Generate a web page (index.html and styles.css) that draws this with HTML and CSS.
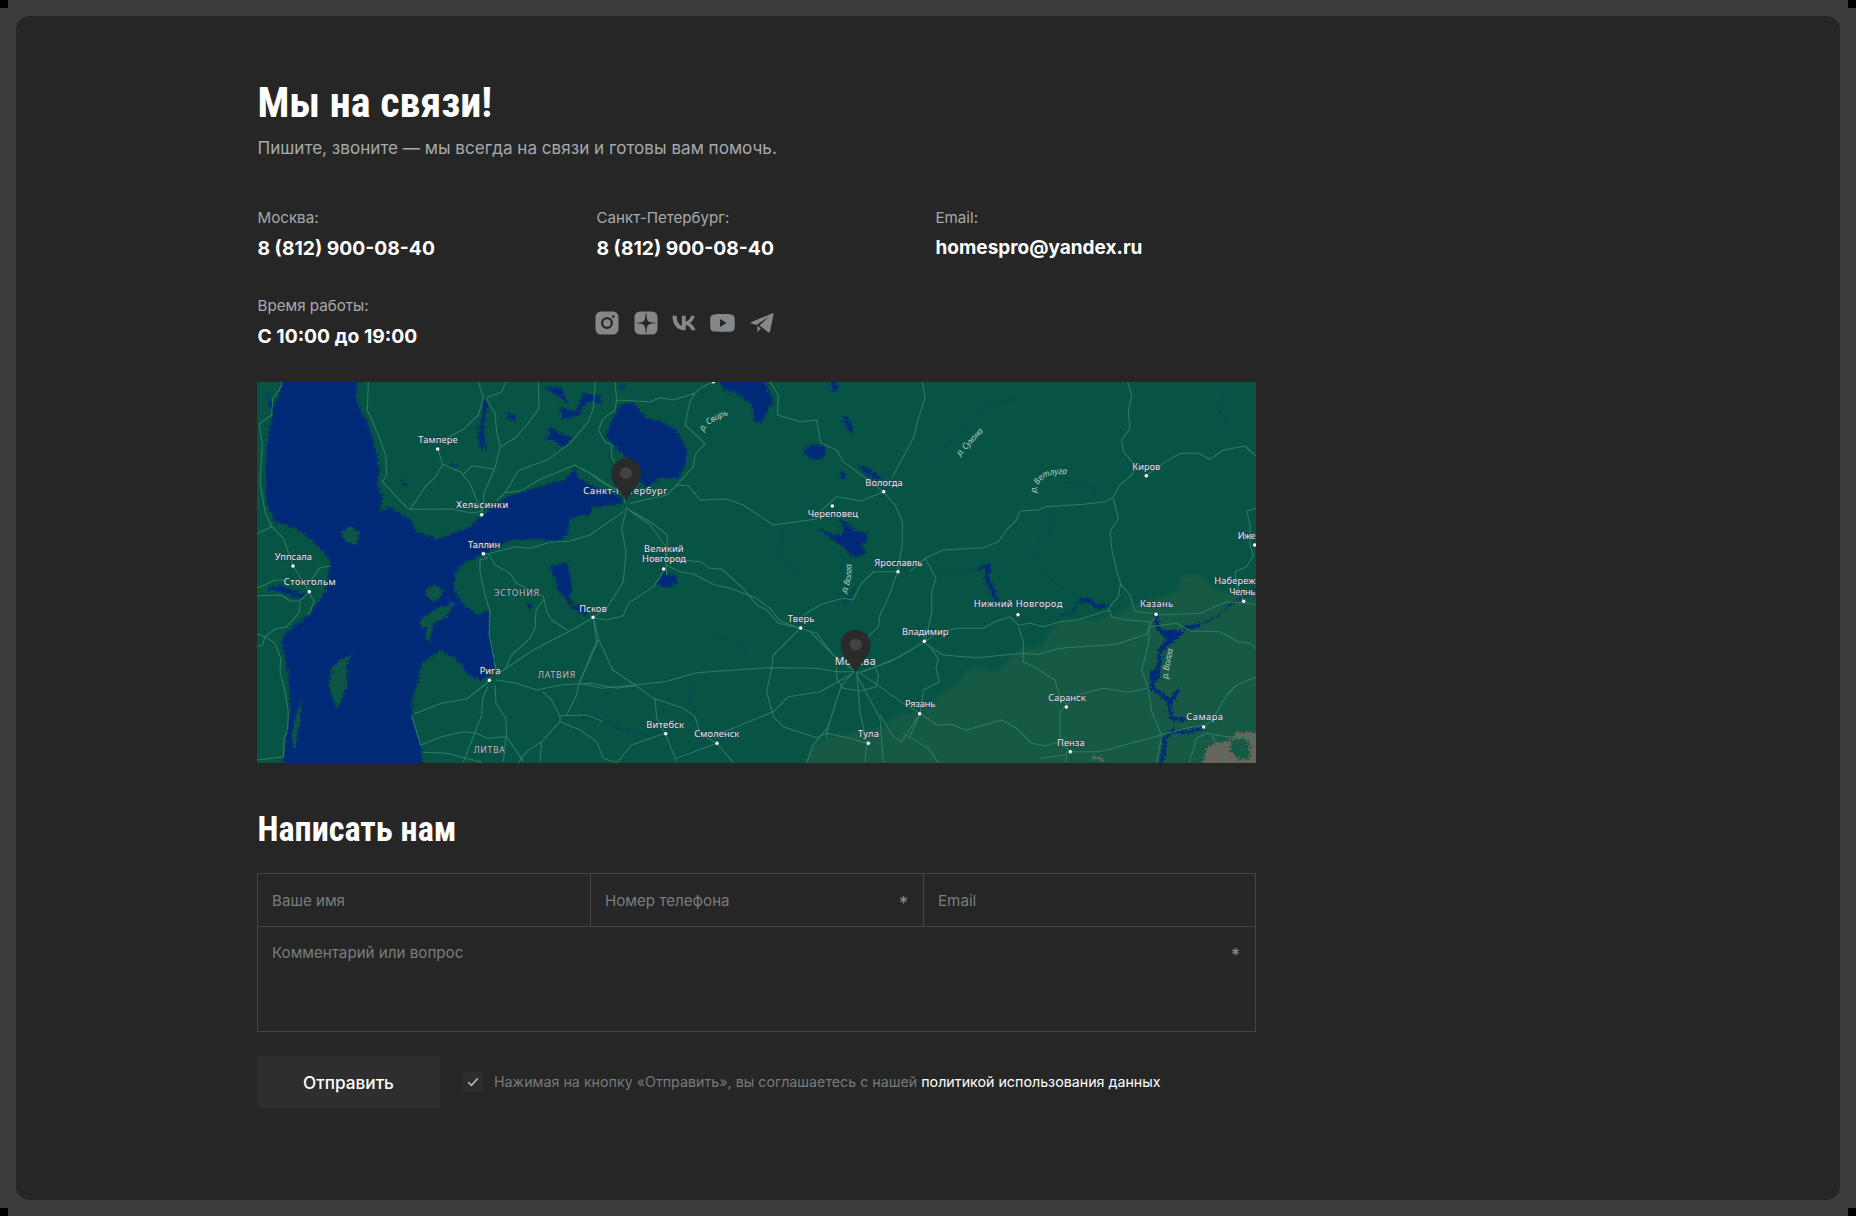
FILE: index.html
```
<!DOCTYPE html>
<html lang="ru">
<head>
<meta charset="utf-8">
<title>Мы на связи!</title>
<link rel="stylesheet" href="styles.css">
</head>
<body>
<i class="corner tl"></i><i class="corner tr"></i><i class="corner bl"></i><i class="corner br"></i>
<main class="panel">
  <section class="content">
    <h1>Мы на связи!</h1>
    <p class="lead">Пишите, звоните — мы всегда на связи и готовы вам помочь.</p>

    <div class="contacts">
      <div><div class="label">Москва:</div><div class="value">8 (812) 900-08-40</div></div>
      <div><div class="label">Санкт-Петербург:</div><div class="value">8 (812) 900-08-40</div></div>
      <div><div class="label">Email:</div><div class="value mail">homespro@yandex.ru</div></div>
      <div><div class="label">Время работы:</div><div class="value hours">С 10:00 до 19:00</div></div>
      <div class="social">
        <svg width="24" height="24" viewBox="0 0 24 24"><path fill-rule="evenodd" d="M6 .5h12A5.500 5.500 0 0 1 23.500 6v12a5.500 5.500 0 0 1-5.500 5.500H6A5.500 5.500 0 0 1 .5 18V6A5.500 5.500 0 0 1 6 .5zM12 6a6 6 0 1 0 0 12a6 6 0 0 0 0-12zm0 2.200a3.800 3.800 0 1 1 0 7.600a3.800 3.800 0 0 1 0-7.600zM18.300 4.200a1.400 1.400 0 1 0 0 2.800a1.400 1.400 0 0 0 0-2.800z"/></svg>
        <svg width="24" height="24" viewBox="0 0 24 24"><path fill-rule="evenodd" d="M6 .5h12A5.500 5.500 0 0 1 23.500 6v12a5.500 5.500 0 0 1-5.500 5.500H6A5.500 5.500 0 0 1 .5 18V6A5.500 5.500 0 0 1 6 .5zM11.600 2c-.2 5-.6 6.800-1.800 8-1.200 1.200-3 1.600-7.800 1.800v.4c4.800.2 6.600.6 7.800 1.800s1.600 3 1.800 8h.8c.2-5 .6-6.800 1.800-8s3-1.600 7.800-1.800v-.4c-4.800-.2-6.600-.6-7.800-1.800s-1.600-3-1.800-8z"/></svg>
        <svg width="24" height="24" viewBox="0 0 24 24"><path d="M13 19.300C5 19.300.7 13.900.5 4.700h4.100c.1 6.700 3.100 9.500 5.300 10.100V4.700h3.800v5.800c2.200-.2 4.600-2.900 5.400-5.800h3.700c-.6 3.500-3.200 6.200-5 7.200 1.800.9 4.700 3.100 5.800 7.400h-4.100c-.9-2.700-3-4.900-5.800-5.200v5.200z"/></svg>
        <svg width="25" height="24" viewBox="0 0 25 24"><path fill-rule="evenodd" d="M4 3.400c3-.5 14-.5 17 0 2.600.4 3.600 1.600 3.700 4.100.2 3 .2 6 0 9-.1 2.500-1.100 3.700-3.700 4.100-3 .4-14 .4-17 0-2.600-.4-3.600-1.600-3.700-4.100-.2-3-.2-6 0-9C.4 5 1.400 3.800 4 3.400zM10 8v8l6.600-4z"/></svg>
        <svg width="24" height="24" viewBox="0 0 24 24"><path d="M22.500 2.300 1 11.200c-.6.300-.5.900 0 1.100l5.300 1.700L19 5.600 9.500 14.500l9 7c.5.400 1.200.2 1.400-.5L23.600 3.200c.1-.7-.4-1.200-1.100-.9zM7.400 14.800v6.400l3.400-3.600z"/></svg>
      </div>
    </div>

    <svg class="map" viewBox="21 21 2997 1143" preserveAspectRatio="none">
      <defs>
        <filter id="coast" x="-5%" y="-5%" width="110%" height="110%"><feTurbulence type="fractalNoise" baseFrequency=".16" numOctaves="3" seed="4"/><feDisplacementMap in="SourceGraphic" scale="26" xChannelSelector="R" yChannelSelector="G"/></filter>
        <filter id="soft"><feGaussianBlur stdDeviation="8"/></filter>
        <g id="pin"><path d="M0 86C-4 62-45 40-45 0a45 45 0 0 1 90 0C45 40 4 62 0 86z" fill="#2a2a2a"/><circle r="18" fill="#434343"/></g>
      </defs>
      <rect x="0" y="0" width="3040" height="1180" fill="#075444"/>
      <path class="steppe" filter="url(#soft)" d="M3040 670 2940 655 2890 640 2850 600 2800 600 2780 650 2680 680 2590 720 2540 735 2440 735 2400 770 2380 810 2300 830 2240 890 2160 875 2120 930 2080 950 2020 1010 1940 1020 1890 1060 1760 1080 1690 1110 1650 1190 3040 1190z"/>
      <g filter="url(#coast)">
        <path class="water" d="M103 0H322L318 70 335 110 352 140 365 185 380 230 388 280 382 330 398 370 390 405 430 400 450 425 480 430 500 470 530 480 560 492 610 475 660 455 700 420 740 385 775 365 850 340 900 325 945 315 975 275 985 310 1020 330 1075 350 1115 365 1115 388 1030 395 1015 422 985 420 958 435 955 475 930 498 860 492 780 495 745 515 700 540 650 560 615 590 612 640 640 690 685 722 715 703 718 780 735 860 730 890 700 915 675 912 655 895 620 855 575 825 515 865 500 935 485 975 490 1040 510 1100 522 1185H95L105 1120 118 1010 120 960 112 880 95 800 110 770 165 730 200 690 225 650 240 575 235 545 200 510 160 475 110 450 75 440 50 380 45 300 50 220 60 150 75 90z"/>
        <path class="land" d="M270 475 300 453 327 470 322 512 290 500zM528 643 555 627 582 650 555 680 530 665zM508 735 560 700 608 688 590 725 550 745 540 803 525 790 532 757 512 757zM308 838 290 870 292 930 262 1005 250 975 237 930 245 880 270 855zM155 965 150 1040 135 1125 123 1090 140 1020zM595 680 615 678 612 695 597 695z"/>
        <path class="water" d="M405 395 440 412 470 445 490 442 455 418 430 400zM428 470 470 455 480 462 432 478zM50 640 90 630 150 655 175 660 140 670 100 655zM45 55 75 95 68 120zM895 575 950 562 960 600 968 650 955 665 975 690 1005 700 1010 722 970 705 945 670 920 640 915 610zM702 70 714 90 702 140 707 225 690 225 684 180 695 140zM685 150 670 152 690 160zM770 110 795 120 792 142 772 130zM450 310 474 332 462 335zM895 152 930 175 972 190 940 217 905 195 880 190 900 180zM878 35 935 38 955 85 925 62zM1000 55 1050 60 1058 85 1012 80 985 120 935 135 930 98 978 110zM595 268 618 265 615 275zM830 680 842 690 838 710zM1105 25 1125 30 1120 50zM555 185 575 190 560 200z"/>
        <path class="water" d="M1110 90 1150 80 1190 130 1230 135 1280 165 1312 225 1308 260 1285 310 1230 308 1195 338 1170 320 1140 260 1100 220 1065 185 1080 150zM1400 10H1540L1570 80 1550 110 1535 145 1510 140 1505 90 1460 55 1425 45zM1740 10H1760L1762 50 1748 55zM1778 122 1795 130 1810 165 1802 180 1788 150zM1660 222 1680 210 1720 212 1730 240 1705 255 1675 250zM1822 268 1855 278 1900 315 1870 308 1840 290zM1768 292 1780 290 1785 300 1778 315zM1765 430 1790 445 1820 470 1850 475 1850 500 1835 510 1848 535 1810 548 1780 515 1740 490 1700 455 1750 480 1775 480 1782 460zM1220 625 1240 590 1255 600 1280 600 1282 625 1252 640zM2735 765 2790 765 2800 775 2770 800 2735 830 2728 820 2750 790zM2703 885 2733 885 2728 915 2708 925z"/>
        <path class="river wide" d="M2185 580 2215 573 2210 610 2225 640 2242 680M2485 680 2515 674 2540 695 2575 690M2715 725 2725 760 2755 790M2765 790 2730 830 2728 870 2705 900 2708 940 2755 975 2765 1030 2808 1035M2760 980 2788 942M2800 762 2850 750M2860 1060 2810 1072 2770 1068 2740 1090 2745 1110 2732 1170"/>
        <path class="river" d="M2430 720 2470 710 2485 680M2850 750 2900 725 2940 690 3017 640M1780 688 1800 665 1815 640"/>
        <path class="brook" d="M2060 595 2185 582M2380 360 2370 400 2410 425 2400 470 2360 505 2360 560 2420 630 2500 670M2400 325H2500L2540 350M1380 780 1440 790 1490 830M1600 460 1590 540 1660 620M2920 50 2910 110 2960 180M1330 880 1320 980M2060 250 2110 190 2200 90 2350 60M1580 830 1640 770"/>
        <path class="stream" d="M990 1025 1040 1030 1110 1060 1200 1085 1240 1075M1280 1150 1400 1105"/>
        <path fill="#68665c" fill-rule="evenodd" d="M3040 1072H2955L2948 1092 2895 1105 2870 1120 2850 1190H3040zM2945 1095 2980 1090 3000 1110 3000 1150 2970 1155 2940 1130zM2527 1155 2530 1138 2540 1145 2560 1150 2558 1162 2545 1152z"/>
      </g>

      <g class="roads">
        <path d="M97 20 88 45 68 70 65 120 28 147 37 210 30 320 45 410 65 455 100 490 130 572 178 650M22 475 65 455M22 640 75 615 110 615M22 662 95 660 120 678 150 677 178 652 192 680 175 720M242 573 210 578 180 620M150 680 148 712 110 755 75 762 45 785 22 778M45 785 75 805 92 850 90 890 105 950 115 1010 113 1060 102 1090 100 1145 22 1155M45 785 38 810 22 815"/>
        <path d="M355 20 352 105 385 180 407 240 410 300 397 320 475 403 605 402 665 415 697 408M480 403 530 330 555 308 578 268 563 222M590 190 640 163 685 120 700 68 685 20M710 68 755 50 768 20M708 70 735 115 740 170 750 215 735 280 703 350 697 408M865 20 867 100 830 150 795 190 752 215M578 268 630 290 660 325 682 380 697 410M640 298 665 272 735 283M765 353 805 287 895 253 960 205 1015 140 1030 100 1036 20M740 378 765 353 815 347 860 318 975 270 1020 295 1060 325 1110 350"/>
        <path d="M697 540 800 515 840 520 900 502 960 498 1020 480 1120 410M715 535 735 570 780 595 800 625 880 665 890 710 905 735 952 765M690 550 690 590 705 660 720 710 718 780 730 840 738 885M700 540 713 550 690 555M880 675 858 705 855 760 840 790 785 840 765 882M765 882 850 825 955 770 1000 745 1030 728M738 900 765 882M738 915 800 925 860 945 930 930 1020 925 1100 940 1155 932"/>
        <path d="M718 918 650 972 575 985 490 1018M713 935 698 970 695 1020 640 1163M735 930 738 985 767 1030 770 1085 820 1160M485 1020 512 1110 575 1085 640 1070 680 1075 710 1090 768 1085 760 1160M520 1132 590 1135 695 1162M878 950 905 975 930 1025 930 1040 875 1100 870 1160M930 1022 1010 1020 1060 1040M948 1022 980 960 985 930 1040 800 1030 728M805 1163 830 1130 875 1100M930 1040 990 1065 1040 1100 1060 1150 1100 1163 1145 1110 1245 1075"/>
        <path d="M1095 20 1100 75 1200 80 1230 68 1270 75 1335 55 1350 40 1390 20M1335 55 1320 80 1305 150 1365 205 1335 240 1330 275 1280 330 1250 360 1140 385M1280 330 1315 332 1350 375 1430 372 1480 390 1570 450 1700 432 1710 410 1760 365 1835 378 1900 350M1100 75 1095 105 1060 130 1045 165 1065 200 1085 210 1085 245 1115 300 1125 385M990 280 1030 300 1090 340M1560 20 1585 60 1582 120 1650 140 1700 135 1712 205 1760 225 1780 260 1900 350M1925 310 1990 190 2005 130 2025 70 2017 20M1900 350 1935 390 1957 440 1957 510 1943 590 1910 680 1890 720 1885 755 1840 800 1817 880"/>
        <path d="M1130 395 1115 460 1128 530 1120 620 1070 700 1030 728M1130 400 1200 450 1245 510 1250 600M1130 400 1200 440 1252 480 1250 550M1250 570 1290 590 1330 597 1395 630 1440 640 1520 670 1560 700 1590 738 1650 760M1250 550 1350 560 1380 580 1415 582 1480 640 1520 690 1550 705 1585 745 1650 760M1240 590 1210 635 1135 685 1120 722 1070 735 1030 728M1030 728 1045 790 1088 885 1155 930 1210 970 1300 1000 1335 1025 1350 1075 1400 1105M1045 795 990 920M990 925 1055 940 1245 920 1340 893 1560 878 1700 880 1760 890 1815 890M1650 760 1570 840 1565 880 1550 950 1570 1025 1600 1055 1700 1088 1730 1075 1800 1090 1850 1105M1650 760 1700 775 1750 840 1810 885M1680 770 1750 840M1660 720 1710 690 1740 680 1780 670 1810 675 1830 630 1870 590 1943 590"/>
        <path d="M1215 970 1220 1030 1245 1075 1280 1160M1400 1105 1280 1150M1405 1110 1450 1163M1400 1080 1570 1010 1615 965 1710 950 1810 895M1760 875 1760 910 1780 940 1830 948 1880 935 1885 900 1870 865 1830 855M1817 885 1775 930 1755 990 1735 1055 1690 1110 1670 1163M1820 890 1830 1010 1850 1105 1845 1163M1820 900 1890 1030 1900 1163M1825 890 1960 985 2010 1015M1820 895 1920 860 2025 800M1840 890 1950 845 2025 800M1890 1020 1930 1085 1955 1100 2010 1015M1960 1075 2035 1120 2065 1163M1735 1045 1730 1090"/>
        <path d="M1980 590 2025 550 2080 525 2200 518 2245 500 2270 465 2300 435 2310 408 2365 405 2385 395 2500 388 2570 380 2590 365 2610 330 2640 305 2660 275 2620 230 2615 195 2640 160 2635 110 2645 60 2633 20M2690 300 2740 265 2790 235 2845 235 2880 253 2920 225 2985 213 3017 243M2590 370 2605 430 2580 470 2585 520 2598 580 2612 625 2605 665 2575 700 2585 725 2630 735 2700 740M2612 628 2640 660 2655 710 2710 715M2025 550 2058 610 2045 650 2045 715 2025 800M2025 800 2060 775 2120 760 2200 760 2235 740 2280 725 2305 750 2340 745 2380 755 2430 740 2480 735 2580 705"/>
        <path d="M2025 805 2080 840 2180 848 2320 835 2365 838 2430 820 2600 808 2690 778 2697 755 2780 745 2820 768 2910 770 2965 800 3000 805 3017 820M2718 720 2850 715 2930 680 3017 688M2718 725 2700 745 2695 810 2675 885 2695 940 2705 1010 2735 1080M2305 755 2320 800 2320 860 2360 880 2415 915 2428 960 2450 990 2430 1010 2430 1100 2460 1130 2550 1130 2735 1080 2810 1060 2860 1050M2450 990 2480 960 2560 940 2635 952 2690 940"/>
        <path d="M2035 810 2065 850 2058 880 2068 920 2020 945 2010 1015 2060 1050 2100 1048 2150 1065 2255 1035 2300 1060 2345 1105 2385 1112 2430 1100M1980 1085 2010 1015M2450 1130 2448 1163M2370 1150 2445 1140M2735 1085 2720 1163M2860 1058 2890 1030 2930 960 2960 930 3017 907M2870 1075 2840 1090 2818 1163M2870 1075 2930 1085 3017 1085M2885 1080 2910 1130 2920 1163M3017 400 2990 408 3000 450 3000 510 3010 540 2990 575 2955 590 2960 630 2980 675"/>
      </g>

      <g class="dots">
        <circle cx="563" cy="222" r="6"/><circle cx="695" cy="419" r="6"/><circle cx="700" cy="536" r="6"/><circle cx="129" cy="573" r="6"/><circle cx="178" cy="650" r="6"/><circle cx="718" cy="916" r="6"/><circle cx="1029" cy="727" r="6"/><circle cx="1241" cy="582" r="6"/><circle cx="1390" cy="20" r="6"/><circle cx="1747" cy="393" r="6"/><circle cx="1901" cy="350" r="6"/><circle cx="1944" cy="590" r="6"/><circle cx="1652" cy="759" r="6"/><circle cx="1247" cy="1076" r="6"/><circle cx="1401" cy="1105" r="6"/><circle cx="1855" cy="1105" r="6"/><circle cx="2009" cy="1016" r="6"/><circle cx="2023" cy="799" r="6"/><circle cx="2304" cy="719" r="6"/><circle cx="2689" cy="302" r="6"/><circle cx="2718" cy="718" r="6"/><circle cx="3014" cy="510" r="6"/><circle cx="2981" cy="679" r="6"/><circle cx="2449" cy="996" r="6"/><circle cx="2461" cy="1130" r="6"/><circle cx="2861" cy="1056" r="6"/>
      </g>

      <g class="cities">
        <text x="505" y="204" textLength="118">Тампере</text>
        <text x="619" y="398" textLength="156">Хельсинки</text>
        <text x="654" y="518" textLength="97">Таллин</text>
        <text x="74" y="555" textLength="112">Уппсала</text>
        <text x="101" y="630" textLength="156">Стокгольм</text>
        <text x="689" y="898" textLength="62">Рига</text>
        <text x="1000" y="357" textLength="252">Санкт-Петербург</text>
        <text x="988" y="711" textLength="82">Псков</text>
        <text x="1182" y="530" textLength="119">Великий</text>
        <text x="1176" y="562" textLength="132">Новгород</text>
        <text x="1673" y="427" textLength="151">Череповец</text>
        <text x="1846" y="333" textLength="112">Вологда</text>
        <text x="1873" y="572" textLength="144">Ярославль</text>
        <text x="1613" y="741" textLength="80">Тверь</text>
        <text x="1189" y="1060" textLength="113">Витебск</text>
        <text x="1333" y="1087" textLength="135">Смоленск</text>
        <text x="1824" y="1087" textLength="63">Тула</text>
        <text class="big" x="1754" y="871" textLength="123">Москва</text>
        <text x="1956" y="780" textLength="139">Владимир</text>
        <text x="1965" y="997" textLength="91">Рязань</text>
        <text x="2171" y="697" textLength="266">Нижний Новгород</text>
        <text x="2647" y="285" textLength="84">Киров</text>
        <text x="2670" y="697" textLength="99">Казань</text>
        <text x="2963" y="492" textLength="53">Иже</text>
        <text x="2893" y="628" textLength="123">Набереж</text>
        <text x="2938" y="659" textLength="78">Челнь</text>
        <text x="2395" y="978" textLength="112">Саранск</text>
        <text x="2421" y="1112" textLength="83">Пенза</text>
        <text x="2809" y="1036" textLength="110">Самара</text>
      </g>
      <g class="countries">
        <text x="732" y="663" textLength="135">ЭСТОНИЯ</text>
        <text x="864" y="909" textLength="112">ЛАТВИЯ</text>
        <text x="671" y="1134" textLength="93">ЛИТВА</text>
      </g>
      <defs>
        <path id="r1" d="M1360 170Q1385 130 1450 118"/>
        <path id="r2" d="M1787 655Q1813 610 1801 545"/>
        <path id="r3" d="M2130 244Q2170 200 2222 148"/>
        <path id="r4" d="M2358 354Q2364 285 2470 300"/>
        <path id="r5" d="M2753 912Q2760 860 2775 800"/>
      </defs>
      <g class="rivers">
        <text><textPath href="#r1">р. Свирь</textPath></text>
        <text><textPath href="#r2">р. Волга</textPath></text>
        <text><textPath href="#r3">р. Сухона</textPath></text>
        <text><textPath href="#r4">р. Ветлуга</textPath></text>
        <text><textPath href="#r5">р. Волга</textPath></text>
      </g>
      <use href="#pin" x="1128" y="295"/>
      <use href="#pin" x="1817" y="809"/>
    </svg>

    <h2>Написать нам</h2>
    <form class="form">
      <div class="fields">
        <label class="field"><span>Ваше имя</span></label>
        <label class="field"><span>Номер телефона</span><b>*</b></label>
        <label class="field"><span>Email</span></label>
        <label class="field comment"><span>Комментарий или вопрос</span><b>*</b></label>
      </div>
      <div class="submit">
        <button type="button">Отправить</button>
        <span class="check"><svg width="12" height="10" viewBox="0 0 12 10"><path d="M1.200 5.200 4.400 8.300 10.800 1.400" fill="none" stroke="#b4b6b7" stroke-width="1.600"/></svg></span>
        <span class="consent">Нажимая на кнопку «Отправить», вы соглашаетесь с нашей <a>политикой использования данных</a></span>
      </div>
    </form>
  </section>
</main>
</body>
</html>
```
FILE: styles.css
```
* { box-sizing: border-box; }
html { background: #3c3c3c; }
body {
  margin: 0;
  height: 1216px;
  padding: 16px;
  overflow: hidden;
  font-family: Inter, "Liberation Sans", sans-serif;
  color: #fff;
}
.corner { position: absolute; width: 8px; height: 8px; background: #000; }
.tl { left: 0; top: 0; }
.tr { right: 0; top: 0; }
.bl { left: 0; bottom: 0; }
.br { right: 0; bottom: 0; }
.panel {
  height: 1184px;
  padding: 62px 0 0 241px;
  border-radius: 14px;
  background: #262626;
}
.content { width: 999px; }
h1, h2 {
  margin: 0;
  padding-left: .5px;
  font-family: "Roboto Condensed", Roboto, sans-serif;
  font-weight: 700;
}
h1 { font-size: 42px; line-height: 49px; }
h2 { margin-top: 46px; font-size: 34.2px; line-height: 40px; }
.lead { margin: 9px 0 0; padding-left: .5px; font-size: 17.1px; line-height: 24px; color: #a7aaab; }
.contacts {
  display: grid;
  grid-template-columns: repeat(3, 339px);
  row-gap: 35px;
  margin-top: 48px;
  padding-left: .5px;
}
.label { font-size: 15.15px; line-height: 20px; color: #a7aaab; }
.value { margin-top: 7px; font-size: 19.3px; line-height: 26px; font-weight: 700; white-space: nowrap; }
.mail { font-size: 19px; }
.social { display: flex; align-items: center; gap: 14.3px; margin-left: -1.2px; }
.social svg { display: block; fill: #85888b; }

.map { display: block; width: 999px; height: 381px; margin-top: 33px; overflow: hidden; }
.steppe { fill: #195a45; }
.water { fill: #002a78; }
.land { fill: #075444; }
.river, .brook, .stream { fill: none; stroke: #02306f; stroke-width: 4; }
.wide { stroke: #002a78; stroke-width: 12; }
.brook { stroke: #064c50; stroke-width: 3; }
.stream { stroke: #053d5c; stroke-width: 3; }
.roads { fill: none; stroke: #307b65; stroke-width: 3.2; stroke-linejoin: round; }
.dots { fill: #fff; stroke: #1b3940; stroke-width: 1.5; }
.map text { font-family: "Noto Sans", sans-serif; }
.cities text, .countries text {
  fill: #e9e6ee;
  font-size: 28px;
  font-weight: 400;
  stroke: #263c4a;
  stroke-width: 3px;
  paint-order: stroke;
}
.cities .big { font-size: 32px; }
.countries text { fill: #b3c3bd; font-size: 26px; }
.rivers text { fill: #b5cac2; font-size: 26px; font-style: italic; letter-spacing: -1px; }

.form { margin-top: 24px; }
.fields { display: grid; grid-template-columns: 333px 333px 333px; }
.field {
  display: flex;
  justify-content: space-between;
  height: 54px;
  margin-right: -1px;
  padding: 17px 15px 0 14px;
  border: 1px solid #444546;
  font-size: 15.17px;
  line-height: 20px;
  color: #7a7d7f;
}
.field:nth-child(3), .comment { margin-right: 0; }
.comment { grid-column: 1 / -1; height: 106px; margin-top: -1px; padding-top: 16px; }
.field b { font-size: 18px; font-weight: 400; padding-top: 3px; color: #8c8f91; }
.submit { display: flex; align-items: center; margin-top: 24px; }
button {
  width: 183px;
  height: 52px;
  padding: 0;
  border: 0;
  background: #2e2e2e;
  color: #fff;
  font: 500 17.2px Inter, sans-serif;
}
.check {
  display: flex;
  align-items: center;
  justify-content: center;
  width: 20px;
  height: 20px;
  margin: 0 11px 0 23px;
  background: #2d2d2d;
}
.consent { padding-bottom: 2px; font-size: 14.25px; color: #777a7c; white-space: nowrap; }
.consent a { color: #fff; }
```
